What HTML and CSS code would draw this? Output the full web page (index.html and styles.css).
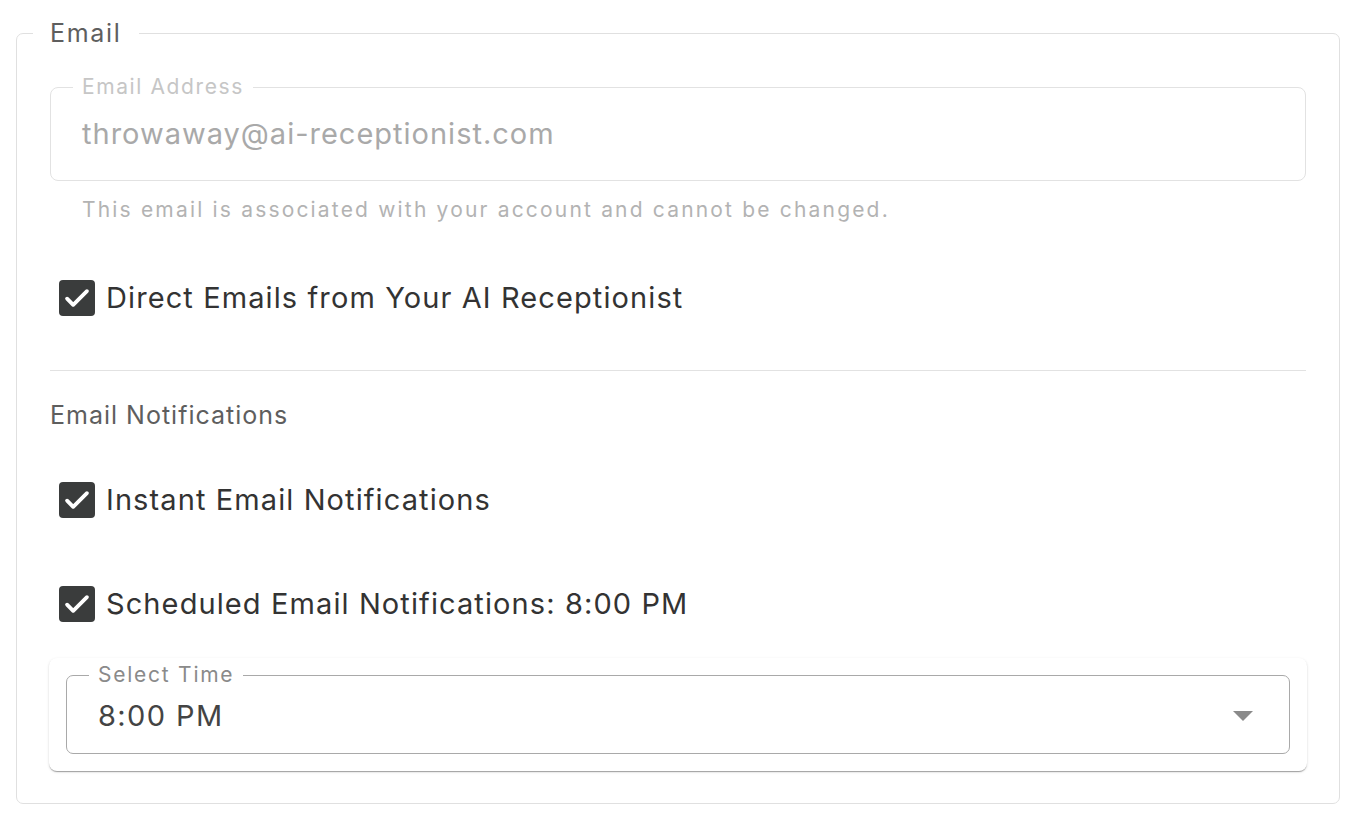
FILE: index.html
```html
<!DOCTYPE html>
<html lang="en">
<head>
<meta charset="utf-8">
<title>Email settings</title>
<link rel="stylesheet" href="styles.css">
</head>
<body>
<div class="page">
  <fieldset class="section">
    <legend class="section-legend">Email</legend>

    <fieldset class="field field-disabled">
      <legend class="field-legend">Email Address</legend>
      <div class="field-value">throwaway@ai-receptionist.com</div>
    </fieldset>
    <p class="helper">This email is associated with your account and cannot be changed.</p>

    <label class="check-row check-first">
      <span class="box"><svg viewBox="0 0 24 24" width="34" height="34"><path d="M5 12.5l4.3 4.3L19 7.2" fill="none" stroke="#fff" stroke-width="2.7" stroke-linecap="round" stroke-linejoin="round"/></svg></span>
      <span class="check-label">Direct Emails from Your AI Receptionist</span>
    </label>

    <hr class="divider">

    <div class="subhead">Email Notifications</div>

    <label class="check-row check-instant">
      <span class="box"><svg viewBox="0 0 24 24" width="34" height="34"><path d="M5 12.5l4.3 4.3L19 7.2" fill="none" stroke="#fff" stroke-width="2.7" stroke-linecap="round" stroke-linejoin="round"/></svg></span>
      <span class="check-label">Instant Email Notifications</span>
    </label>

    <label class="check-row check-scheduled">
      <span class="box"><svg viewBox="0 0 24 24" width="34" height="34"><path d="M5 12.5l4.3 4.3L19 7.2" fill="none" stroke="#fff" stroke-width="2.7" stroke-linecap="round" stroke-linejoin="round"/></svg></span>
      <span class="check-label">Scheduled Email Notifications: 8:00 PM</span>
    </label>

    <div class="paper">
      <fieldset class="field field-select">
        <legend class="field-legend select-legend">Select Time</legend>
        <div class="select-row">
          <span class="select-value">8:00 PM</span>
          <svg class="arrow" viewBox="0 0 20 10" width="20" height="10"><path d="M0 0h20L10 10z" fill="#8a8a8a"/></svg>
        </div>
      </fieldset>
    </div>
  </fieldset>
</div>
</body>
</html>
```

FILE: styles.css
```css
* { box-sizing: border-box; }
html, body { margin: 0; padding: 0; background: #fff; }
body {
  font-family: Inter, "Noto Sans", "Liberation Sans", sans-serif;
  color: #333;
}
.page {
  padding: 17px 23px 0 16px;
}
.section {
  margin: 0;
  border: 1.5px solid #e0e0e0;
  border-radius: 7px;
  padding: 0 33px 32px 33px;
  min-width: 0;
}
.section-legend {
  margin-left: -17px;
  padding: 0 17px;
  font-size: 25px;
  line-height: 32px;
  color: #5e5e5e;
  letter-spacing: 1.7px;
}
.field {
  margin: 26px 0 0 0;
  border: 1.5px solid #e2e2e2;
  border-radius: 8px;
  padding: 0 31px;
  min-width: 0;
}
.field-legend {
  margin-left: -9px;
  padding: 0 9px;
  font-size: 21px;
  line-height: 24px;
  color: #c6c6c6;
  letter-spacing: 1.6px;
}
.field-value {
  font-size: 29px;
  line-height: 34px;
  color: #a9a9a9;
  letter-spacing: 1.0px;
  padding: 18px 0 29px 0;
}
.helper {
  margin: 15px 0 0 32px;
  font-size: 21px;
  line-height: 28px;
  color: #b3b3b3;
  letter-spacing: 2.18px;
}
.check-row {
  display: flex;
  align-items: center;
  height: 44px;
  padding-left: 9px;
}
.check-first { margin-top: 52px; }
.check-instant { margin-top: 47px; }
.check-scheduled { margin-top: 60px; }
.box {
  width: 36px;
  height: 36px;
  border-radius: 4px;
  background: #3a3c3c;
  display: flex;
  align-items: center;
  justify-content: center;
  flex: none;
}
.check-label {
  margin-left: 11px;
  font-size: 29px;
  line-height: 36px;
  color: #333;
  letter-spacing: 1.1px;
}
.divider {
  margin: 50px 0 0 0;
  border: 0;
  border-top: 1.5px solid #e2e2e2;
  height: 0;
}
.subhead {
  margin-top: 28px;
  font-size: 25px;
  line-height: 32px;
  color: #5e5e5e;
  letter-spacing: 1.0px;
}
.paper {
  margin-top: 32px;
  margin-left: -1px;
  margin-right: -1px;
  border-radius: 8px;
  background: #fff;
  box-shadow: 0 2px 1px -1px rgba(0,0,0,0.2), 0 1px 1px 0 rgba(0,0,0,0.14), 0 1px 3px 0 rgba(0,0,0,0.12);
  padding: 5px 17px 17px 17px;
}
.field-select {
  margin: 0;
  border: 1.5px solid #a9a9a9;
  border-radius: 7px;
  padding: 0 31px;
}
.select-legend {
  color: #8a8a8a;
  letter-spacing: 1.75px;
}
.select-row {
  display: flex;
  align-items: center;
  justify-content: space-between;
  height: 54px;
  margin-top: 2px;
  margin-bottom: 10px;
}
.select-value {
  font-size: 29px;
  line-height: 34px;
  color: #444;
  letter-spacing: 1.4px;
}
.arrow {
  margin-right: 5px;
}
```
